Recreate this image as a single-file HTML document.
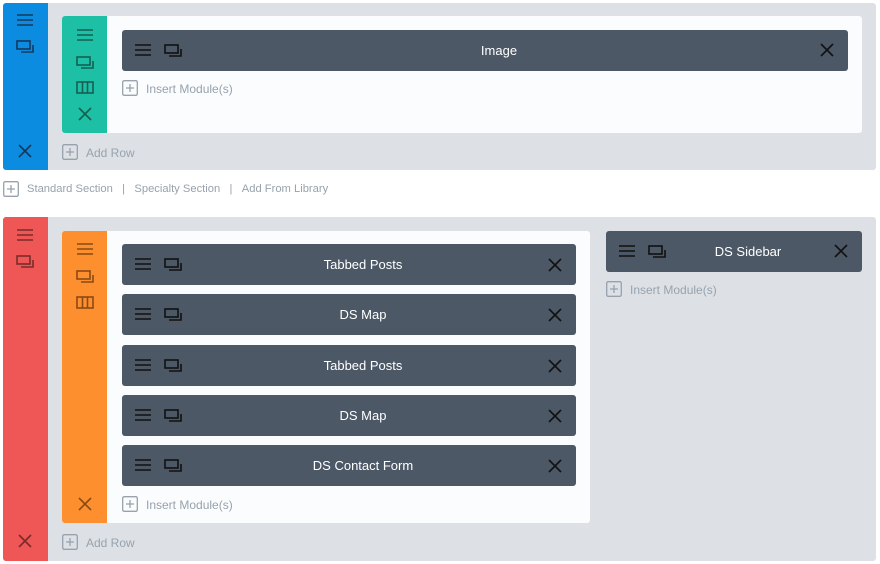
<!DOCTYPE html><html><head><style>
body{margin:0;width:880px;height:564px;background:#fff;font-family:"Liberation Sans",sans-serif;position:relative;overflow:hidden}
div{position:absolute;box-sizing:border-box}
.sec{background:#dde1e6;border-radius:3px}
.bar{border-radius:3px 0 0 3px}
.row{background:#fbfcfd;border-radius:3px}
.mod{background:#4c5866;border-radius:3px;color:#fff;font-size:13px;text-align:center;line-height:41px;height:41px;padding-left:28px}
.ins{font-size:12px;color:#97a2ad;line-height:16px}
svg{position:absolute}
</style></head><body>
<svg width="0" height="0" style="position:absolute"><defs>
<g id="hb" fill="none" stroke-width="1.6"><path d="M1 2h16M1 7h16M1 12h16"/></g>
<g id="dp" fill="none" stroke-width="1.6"><rect x="1" y="1" width="13" height="8"/><path d="M17 5v7H5"/></g>
<g id="xx" fill="none" stroke-width="1.6"><path d="M2 2l12 12M14 2L2 14"/></g>
<g id="cl" fill="none" stroke-width="1.6"><rect x="1" y="1" width="16" height="11"/><path d="M6.5 1v11M11.5 1v11"/></g>
<g id="pl" fill="none" stroke-width="1.3"><rect x="0.7" y="0.7" width="14.6" height="14.6" rx="1.5"/><path d="M8 4v8M4 8h8"/></g>
</defs></svg>

<div class="sec" style="left:3px;top:3px;width:873px;height:167px"></div>
<div class="bar" style="left:3px;top:3px;width:45px;height:167px;background:#0c8ce0"></div>
<svg style="left:16px;top:13px" width="20" height="16" stroke="#16375a"><use href="#hb"/></svg>
<svg style="left:16px;top:40px" width="20" height="14" stroke="#16375a"><use href="#dp"/></svg>
<svg style="left:17px;top:143px" width="16" height="16" stroke="#16375a"><use href="#xx"/></svg>
<div class="row" style="left:62px;top:16px;width:800px;height:117px"></div>
<div class="bar" style="left:62px;top:16px;width:45px;height:117px;background:#1dc0a4"></div>
<svg style="left:76px;top:28px" width="20" height="16" stroke="#155f52"><use href="#hb"/></svg>
<svg style="left:76px;top:56px" width="20" height="14" stroke="#155f52"><use href="#dp"/></svg>
<svg style="left:76px;top:81px" width="20" height="14" stroke="#155f52"><use href="#cl"/></svg>
<svg style="left:77px;top:106px" width="16" height="16" stroke="#155f52"><use href="#xx"/></svg>
<div class="mod" style="left:122px;top:30px;width:726px">Image</div>
<svg style="left:134px;top:43px" width="20" height="16" stroke="#111"><use href="#hb"/></svg>
<svg style="left:164px;top:44px" width="20" height="14" stroke="#111"><use href="#dp"/></svg>
<svg style="left:819px;top:42px" width="16" height="16" stroke="#111"><use href="#xx"/></svg>
<svg style="left:122px;top:80px" width="16" height="16" stroke="#97a2ad"><use href="#pl"/></svg>
<div class="ins" style="left:146px;top:81px">Insert Module(s)</div>
<svg style="left:62px;top:144px" width="16" height="16" stroke="#97a2ad"><use href="#pl"/></svg>
<div class="ins" style="left:86px;top:145px">Add Row</div>

<svg style="left:3px;top:181px" width="16" height="16" stroke="#97a2ad"><use href="#pl"/></svg>
<div class="ins" style="left:27px;top:181px;font-size:11.2px">Standard Section &nbsp;&nbsp;| &nbsp;&nbsp;Specialty Section &nbsp;&nbsp;| &nbsp;&nbsp;Add From Library</div>

<div class="sec" style="left:3px;top:217px;width:873px;height:344px"></div>
<div class="bar" style="left:3px;top:217px;width:45px;height:344px;background:#ef5656"></div>
<svg style="left:16px;top:228px" width="20" height="16" stroke="#7a2b2b"><use href="#hb"/></svg>
<svg style="left:16px;top:255px" width="20" height="14" stroke="#7a2b2b"><use href="#dp"/></svg>
<svg style="left:17px;top:533px" width="16" height="16" stroke="#7a2b2b"><use href="#xx"/></svg>
<div class="row" style="left:62px;top:231px;width:528px;height:292px"></div>
<div class="bar" style="left:62px;top:231px;width:45px;height:292px;background:#fd8f2e"></div>
<svg style="left:76px;top:242px" width="20" height="16" stroke="#8a4a14"><use href="#hb"/></svg>
<svg style="left:76px;top:270px" width="20" height="14" stroke="#8a4a14"><use href="#dp"/></svg>
<svg style="left:76px;top:296px" width="20" height="14" stroke="#8a4a14"><use href="#cl"/></svg>
<svg style="left:77px;top:496px" width="16" height="16" stroke="#8a4a14"><use href="#xx"/></svg>

<div class="mod" style="left:122px;top:244px;width:454px">Tabbed Posts</div>
<div class="mod" style="left:122px;top:294px;width:454px">DS Map</div>
<div class="mod" style="left:122px;top:345px;width:454px">Tabbed Posts</div>
<div class="mod" style="left:122px;top:395px;width:454px">DS Map</div>
<div class="mod" style="left:122px;top:445px;width:454px">DS Contact Form</div>
<svg style="left:134px;top:257px" width="20" height="16" stroke="#111"><use href="#hb"/></svg><svg style="left:164px;top:258px" width="20" height="14" stroke="#111"><use href="#dp"/></svg><svg style="left:547px;top:257px" width="16" height="16" stroke="#111"><use href="#xx"/></svg>
<svg style="left:134px;top:307px" width="20" height="16" stroke="#111"><use href="#hb"/></svg><svg style="left:164px;top:308px" width="20" height="14" stroke="#111"><use href="#dp"/></svg><svg style="left:547px;top:307px" width="16" height="16" stroke="#111"><use href="#xx"/></svg>
<svg style="left:134px;top:358px" width="20" height="16" stroke="#111"><use href="#hb"/></svg><svg style="left:164px;top:359px" width="20" height="14" stroke="#111"><use href="#dp"/></svg><svg style="left:547px;top:358px" width="16" height="16" stroke="#111"><use href="#xx"/></svg>
<svg style="left:134px;top:408px" width="20" height="16" stroke="#111"><use href="#hb"/></svg><svg style="left:164px;top:409px" width="20" height="14" stroke="#111"><use href="#dp"/></svg><svg style="left:547px;top:408px" width="16" height="16" stroke="#111"><use href="#xx"/></svg>
<svg style="left:134px;top:458px" width="20" height="16" stroke="#111"><use href="#hb"/></svg><svg style="left:164px;top:459px" width="20" height="14" stroke="#111"><use href="#dp"/></svg><svg style="left:547px;top:458px" width="16" height="16" stroke="#111"><use href="#xx"/></svg>
<svg style="left:122px;top:496px" width="16" height="16" stroke="#97a2ad"><use href="#pl"/></svg>
<div class="ins" style="left:146px;top:497px">Insert Module(s)</div>

<div class="mod" style="left:606px;top:231px;width:256px">DS Sidebar</div>
<svg style="left:618px;top:244px" width="20" height="16" stroke="#111"><use href="#hb"/></svg><svg style="left:648px;top:245px" width="20" height="14" stroke="#111"><use href="#dp"/></svg><svg style="left:833px;top:243px" width="16" height="16" stroke="#111"><use href="#xx"/></svg>
<svg style="left:606px;top:281px" width="16" height="16" stroke="#97a2ad"><use href="#pl"/></svg>
<div class="ins" style="left:630px;top:282px">Insert Module(s)</div>
<svg style="left:62px;top:534px" width="16" height="16" stroke="#97a2ad"><use href="#pl"/></svg>
<div class="ins" style="left:86px;top:535px">Add Row</div>
</body></html>
